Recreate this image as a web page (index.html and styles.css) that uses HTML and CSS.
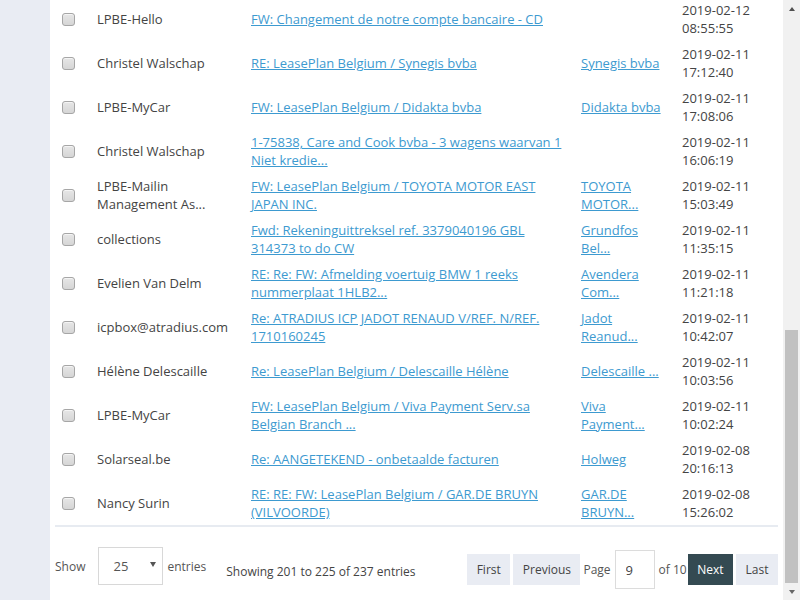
FILE: index.html
```html
<!DOCTYPE html>
<html lang="en">
<head>
<meta charset="utf-8">
<title>Inbox</title>
<link rel="stylesheet" href="styles.css">
</head>
<body>
<div class="window">
  <div class="viewport">
    <div class="page">
      <main class="panel">
        <table class="mail">
          <colgroup>
            <col class="c-check"><col class="c-from"><col class="c-subject"><col class="c-company"><col class="c-date">
          </colgroup>
          <tbody>
            <tr><td class="check"><input type="checkbox" class="cb"></td><td>LPBE-Hello</td><td><a href="#">FW: Changement de notre compte bancaire - CD</a></td><td></td><td>2019-02-12 08:55:55</td></tr>
            <tr><td class="check"><input type="checkbox" class="cb"></td><td>Christel Walschap</td><td><a href="#">RE: LeasePlan Belgium / Synegis bvba</a></td><td><a href="#">Synegis bvba</a></td><td>2019-02-11 17:12:40</td></tr>
            <tr><td class="check"><input type="checkbox" class="cb"></td><td>LPBE-MyCar</td><td><a href="#">FW: LeasePlan Belgium / Didakta bvba</a></td><td><a href="#">Didakta bvba</a></td><td>2019-02-11 17:08:06</td></tr>
            <tr><td class="check"><input type="checkbox" class="cb"></td><td>Christel Walschap</td><td><a href="#">1-75838, Care and Cook bvba - 3 wagens waarvan 1 Niet kredie...</a></td><td></td><td>2019-02-11 16:06:19</td></tr>
            <tr><td class="check"><input type="checkbox" class="cb"></td><td>LPBE-Mailin Management As...</td><td><a href="#">FW: LeasePlan Belgium / TOYOTA MOTOR EAST JAPAN INC.</a></td><td><a href="#">TOYOTA MOTOR...</a></td><td>2019-02-11 15:03:49</td></tr>
            <tr><td class="check"><input type="checkbox" class="cb"></td><td>collections</td><td><a href="#">Fwd: Rekeninguittreksel ref. 3379040196 GBL 314373 to do CW</a></td><td><a href="#">Grundfos Bel...</a></td><td>2019-02-11 11:35:15</td></tr>
            <tr><td class="check"><input type="checkbox" class="cb"></td><td>Evelien Van Delm</td><td><a href="#">RE: Re: FW: Afmelding voertuig BMW 1 reeks nummerplaat 1HLB2...</a></td><td><a href="#">Avendera Com...</a></td><td>2019-02-11 11:21:18</td></tr>
            <tr><td class="check"><input type="checkbox" class="cb"></td><td>icpbox@atradius.com</td><td><a href="#">Re: ATRADIUS ICP JADOT RENAUD V/REF. N/REF. 1710160245</a></td><td><a href="#">Jadot Reanud...</a></td><td>2019-02-11 10:42:07</td></tr>
            <tr><td class="check"><input type="checkbox" class="cb"></td><td>Hélène Delescaille</td><td><a href="#">Re: LeasePlan Belgium / Delescaille Hélène</a></td><td><a href="#">Delescaille ...</a></td><td>2019-02-11 10:03:56</td></tr>
            <tr><td class="check"><input type="checkbox" class="cb"></td><td>LPBE-MyCar</td><td><a href="#">FW: LeasePlan Belgium / Viva Payment Serv.sa Belgian Branch ...</a></td><td><a href="#">Viva Payment...</a></td><td>2019-02-11 10:02:24</td></tr>
            <tr><td class="check"><input type="checkbox" class="cb"></td><td>Solarseal.be</td><td><a href="#">Re: AANGETEKEND - onbetaalde facturen</a></td><td><a href="#">Holweg</a></td><td>2019-02-08 20:16:13</td></tr>
            <tr><td class="check"><input type="checkbox" class="cb"></td><td>Nancy Surin</td><td><a href="#">RE: RE: FW: LeasePlan Belgium / GAR.DE BRUYN (VILVOORDE)</a></td><td><a href="#">GAR.DE BRUYN...</a></td><td>2019-02-08 15:26:02</td></tr>
          </tbody>
        </table>
        <div class="footer">
          <div class="length">
            <span>Show</span>
            <span class="select-wrap">
              <select class="select">
                <option>10</option>
                <option selected>25</option>
                <option>50</option>
                <option>100</option>
              </select>
            </span>
            <span>entries</span>
          </div>
          <div class="info">Showing 201 to 225 of 237 entries</div>
          <div class="pager">
            <button class="btn" type="button">First</button>
            <button class="btn" type="button">Previous</button>
            <span class="pager-label">Page</span>
            <input class="page-input" type="text" value="9">
            <span class="pager-label of">of 10</span>
            <button class="btn btn-dark" type="button">Next</button>
            <button class="btn" type="button">Last</button>
          </div>
        </div>
      </main>
    </div>
  </div>
  <div class="scrollbar" aria-hidden="true">
    <span class="sb-arrow sb-up"></span>
    <span class="sb-space"></span>
    <span class="sb-thumb"></span>
    <span class="sb-arrow sb-down"></span>
  </div>
</div>
</body>
</html>
```

FILE: styles.css
```css
html, body {
  margin: 0;
  height: 100%;
}

body {
  font-family: "Open Sans", "DejaVu Sans", sans-serif;
  font-size: 13px;
  color: #444;
  overflow: hidden;
}

.window {
  display: flex;
  height: 100vh;
}

.viewport {
  flex: 1;
  min-width: 0;
  overflow: hidden;
  display: flex;
  flex-direction: column-reverse;
  background: #e9ecf3;
}

.page {
  padding-left: 50px;
}

.panel {
  background: #fff;
  padding: 0 5px 11px;
}

/* table */
.mail {
  width: 100%;
  table-layout: fixed;
  border-collapse: collapse;
  border-bottom: 2px solid #e7ebf1;
}

.c-check { width: 34px; }
.c-from { width: 154px; }
.c-subject { width: 330px; }
.c-company { width: 101px; }
.c-date { width: 104px; }

.mail td {
  padding: 4px 8px;
  height: 36px;
  line-height: 18px;
  vertical-align: middle;
  color: #444;
}

.mail td.check {
  padding-left: 7px;
  padding-right: 0;
}

.mail a {
  color: #3d9ad0;
  text-decoration: underline;
}

.cb {
  appearance: none;
  -webkit-appearance: none;
  display: block;
  margin: 0;
  width: 13px;
  height: 13px;
  border: 1px solid #a6a6a6;
  border-radius: 3px;
  background: linear-gradient(#e6e6e6, #d6d6d6);
  box-shadow: inset 0 1px 0 #f4f4f4;
  box-sizing: border-box;
}

/* footer */
.footer {
  display: flex;
  align-items: flex-start;
  padding-top: 20px;
  font-size: 12px;
}

.length {
  display: flex;
  align-items: center;
  color: #555;
}

.select-wrap {
  position: relative;
  display: block;
  margin: 0 4px 0 13px;
}

.select {
  appearance: none;
  -webkit-appearance: none;
  display: block;
  width: 65px;
  height: 38px;
  padding: 0 0 0 14px;
  border: 1px solid #d8d8d8;
  border-radius: 0;
  background: #fff;
  font-family: inherit;
  font-size: 13px;
  color: #555;
}

.select-wrap::after {
  content: "";
  position: absolute;
  right: 7px;
  top: 15px;
  border-left: 3px solid transparent;
  border-right: 3px solid transparent;
  border-top: 5px solid #555;
}

.info {
  margin: 16px 0 0 20px;
  line-height: 18px;
  color: #444;
}

.pager {
  margin: 3px 0 0 auto;
  display: flex;
  align-items: center;
}

.btn {
  height: 31px;
  padding: 0 9.5px;
  margin-left: 3px;
  border: 0;
  background: #e9ecf3;
  font-family: inherit;
  font-size: 12px;
  color: #444;
}

.btn:first-child {
  margin-left: 0;
}

.btn-dark {
  background: #344a52;
  color: #fff;
  margin-left: 1px;
}

.pager-label {
  margin-left: 3px;
  color: #555;
}

.page-input {
  box-sizing: border-box;
  width: 40px;
  height: 39px;
  margin-left: 4px;
  padding: 0 0 0 10px;
  border: 1px solid #dcdcdc;
  font-family: inherit;
  font-size: 13px;
  color: #444;
}

.pager-label.of {
  margin-left: 4px;
}

/* scrollbar */
.scrollbar {
  width: 17px;
  flex: none;
  display: flex;
  flex-direction: column;
  align-items: center;
  background: #f1f1f1;
}

.sb-arrow {
  height: 17px;
  width: 17px;
  flex: none;
  display: flex;
  align-items: center;
  justify-content: center;
}

.sb-arrow::before {
  content: "";
  border-left: 3.5px solid transparent;
  border-right: 3.5px solid transparent;
}

.sb-up::before {
  border-bottom: 4px solid #505050;
}

.sb-down::before {
  border-top: 4px solid #666;
}

.sb-space {
  flex: 1;
}

.sb-thumb {
  width: 13px;
  height: 253px;
  flex: none;
  background: #c1c1c1;
}
```
